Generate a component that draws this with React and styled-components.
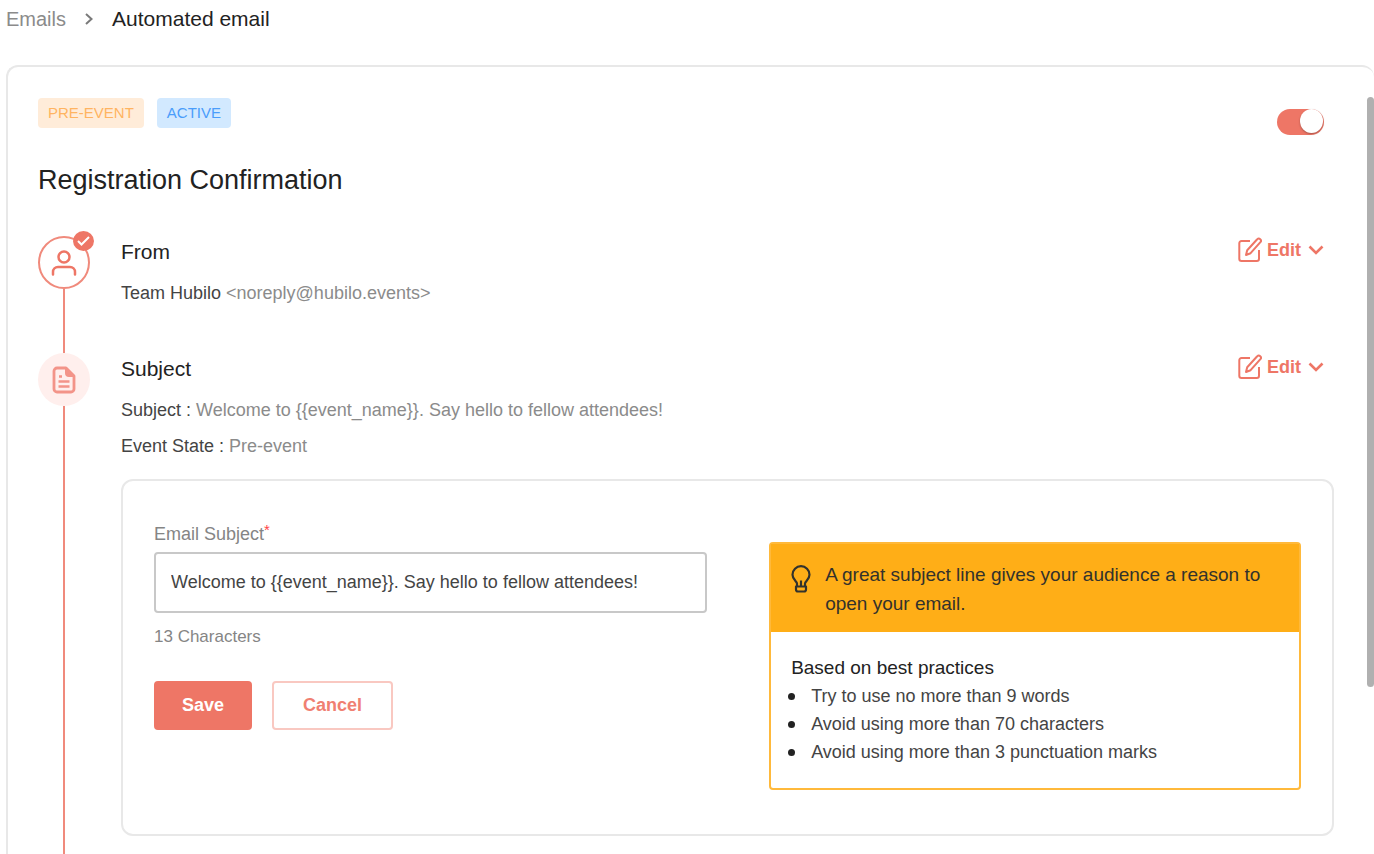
import React, { useState } from 'react'
import styled, { createGlobalStyle } from 'styled-components'

const tips = [
  'Try to use no more than 9 words',
  'Avoid using more than 70 characters',
  'Avoid using more than 3 punctuation marks',
]

const ChevronRight = () => (
  <svg width="10" height="14" viewBox="0 0 10 14" fill="none" stroke="#7a7a7a" strokeWidth="2" aria-hidden="true">
    <path d="M2 2l5.500 5L2 12" />
  </svg>
)

const ChevronDown = () => (
  <svg width="16" height="10" viewBox="0 0 16 10" fill="none" stroke="currentColor" strokeWidth="2.600" aria-hidden="true">
    <path d="M1.500 1.500L8 8l6.500-6.500" />
  </svg>
)

const PenIcon = () => (
  <svg width="24" height="26" viewBox="0 0 24 26" fill="none" stroke="currentColor" strokeWidth="2" strokeLinejoin="round" aria-hidden="true">
    <path d="M12 4H3.500A2.200 2.200 0 0 0 1.300 6.200V21.800A2.200 2.200 0 0 0 3.500 24H18.800A2.200 2.200 0 0 0 21 21.800V13" />
    <path d="M19.200 2.300a2.100 2.100 0 0 1 3.200 2.900L12.600 16.200 8 18l1.200-4.800z" />
  </svg>
)

const UserIcon = () => (
  <svg width="26" height="28" viewBox="0 0 26 28" fill="none" stroke="#ee7666" strokeWidth="2.500" strokeLinecap="round" aria-hidden="true">
    <circle cx="13" cy="8" r="5.500" />
    <path d="M2 25.500v-2.500a5 5 0 0 1 5-5h12a5 5 0 0 1 5 5V25.500" />
  </svg>
)

const FileIcon = () => (
  <svg width="24" height="28" viewBox="0 0 24 28" fill="none" stroke="#f39489" strokeWidth="2.800" strokeLinejoin="round" aria-hidden="true">
    <path d="M14 2H5a3 3 0 0 0-3 3v18a3 3 0 0 0 3 3h14a3 3 0 0 0 3-3V10z" />
    <path d="M14 2v5a3 3 0 0 0 3 3h5z" fill="#f39489" strokeWidth="2" />
    <path d="M7 10.500h3M6.500 15.500h11M6.500 20.500h11" strokeWidth="2.600" />
  </svg>
)

const CheckIcon = () => (
  <svg width="13" height="10" viewBox="0 0 13 10" fill="none" stroke="#fff" strokeWidth="2" aria-hidden="true">
    <path d="M1 5l3.500 3.500L12 1" />
  </svg>
)

const BulbIcon = () => (
  <svg width="20" height="28" viewBox="0 0 20 28" fill="none" stroke="#33322c" strokeWidth="2.200" strokeLinejoin="round" aria-hidden="true">
    <path d="M6 21v-2.500C6 16.500 1.500 14.500 1.500 9.700a8.500 8.500 0 0 1 17 0c0 4.800-4.500 6.800-4.500 8.800V21" />
    <path d="M5 21.500h10v3a2 2 0 0 1-2 2H7a2 2 0 0 1-2-2zM10 15.500v6" />
  </svg>
)

const EditButton = () => (
  <Edit type="button">
    <PenIcon />
    <span>Edit</span>
    <ChevronDown />
  </Edit>
)

const App = () => {
  const [active, setActive] = useState(true)
  const [subject, setSubject] = useState(
    'Welcome to {{event_name}}. Say hello to fellow attendees!'
  )

  return (
    <Page>
      <GlobalStyle />
      <Breadcrumb aria-label="Breadcrumb">
        <a href="#emails">Emails</a>
        <ChevronRight />
        <span>Automated email</span>
      </Breadcrumb>
      <Card>
        <Content>
          <Header>
            <Tags>
              <Tag $bg="#ffecd9" $color="#ffb461">PRE-EVENT</Tag>
              <Tag $bg="#d2e9ff" $color="#4a9dfb">ACTIVE</Tag>
            </Tags>
            <Toggle
              type="checkbox"
              role="switch"
              aria-label="Email active"
              checked={active}
              onChange={(e) => setActive(e.target.checked)}
            />
          </Header>
          <Title>Registration Confirmation</Title>

          <Step>
            <Rail>
              <Circle $outlined>
                <UserIcon />
                <Badge>
                  <CheckIcon />
                </Badge>
              </Circle>
              <Line />
            </Rail>
            <StepBody>
              <StepHead>
                <h2>From</h2>
                <EditButton />
              </StepHead>
              <Detail>
                Team Hubilo <span>&lt;noreply@hubilo.events&gt;</span>
              </Detail>
            </StepBody>
          </Step>

          <Step $grow>
            <Rail>
              <Circle>
                <FileIcon />
              </Circle>
              <Line />
            </Rail>
            <StepBody>
              <StepHead>
                <h2>Subject</h2>
                <EditButton />
              </StepHead>
              <Detail>
                Subject : <span>Welcome to {'{{event_name}}'}. Say hello to fellow attendees!</span>
              </Detail>
              <Detail>
                Event State : <span>Pre-event</span>
              </Detail>
              <Panel>
                <form onSubmit={(e) => e.preventDefault()}>
                  <Label htmlFor="subject">
                    Email Subject<sup>*</sup>
                  </Label>
                  <Input
                    id="subject"
                    type="text"
                    value={subject}
                    onChange={(e) => setSubject(e.target.value)}
                  />
                  <Counter>13 Characters</Counter>
                  <Actions>
                    <Button type="submit" $primary>Save</Button>
                    <Button type="button">Cancel</Button>
                  </Actions>
                </form>
                <Tip>
                  <TipHead>
                    <BulbIcon />
                    <p>A great subject line gives your audience a reason to open your email.</p>
                  </TipHead>
                  <TipBody>
                    <h3>Based on best practices</h3>
                    <ul>
                      {tips.map((tip) => (
                        <li key={tip}>{tip}</li>
                      ))}
                    </ul>
                  </TipBody>
                </Tip>
              </Panel>
            </StepBody>
          </Step>
        </Content>
        <Scrollbar />
      </Card>
    </Page>
  )
}

//Styled Components
const GlobalStyle = createGlobalStyle`
  * {
    margin: 0;
    padding: 0;
    box-sizing: border-box;
  }
  body {
    background: #fff;
    color: #222;
    font-family: "Liberation Sans", Arial, sans-serif;
    font-size: 18px;
  }
  input, button {
    font-family: inherit;
    font-size: inherit;
  }
  svg {
    flex: none;
  }
`

const Page = styled.main`
  height: 100vh;
  display: flex;
  flex-direction: column;
  overflow: hidden;
  padding-left: 6px;
`

const Breadcrumb = styled.nav`
  display: flex;
  align-items: center;
  gap: 18px;
  margin-bottom: 27px;
  font-size: 21px;
  line-height: 38px;

  a {
    color: #8b8b8b;
    font-size: 20px;
    text-decoration: none;
  }
`

const Card = styled.section`
  flex: 1;
  min-height: 0;
  display: flex;
  border: 2px solid #e8e8e8;
  border-width: 2px 0 0 2px;
  border-radius: 12px 12px 0 0;
`

const Content = styled.div`
  flex: 1;
  display: flex;
  flex-direction: column;
  padding: 31px 33px 0 30px;
`

const Scrollbar = styled.div`
  width: 7px;
  height: 75%;
  margin-top: 30px;
  border-radius: 4px;
  background: #b0b0b0;
`

const Header = styled.div`
  display: flex;
  justify-content: space-between;
  padding-right: 10px;
`

const Tags = styled.div`
  display: flex;
  align-items: flex-start;
  gap: 13px;
`

const Tag = styled.span`
  padding: 0 10px;
  border-radius: 4px;
  font-size: 15px;
  line-height: 30px;
  background: ${(props) => props.$bg};
  color: ${(props) => props.$color};
`

const Toggle = styled.input`
  appearance: none;
  display: flex;
  justify-content: flex-start;
  width: 47px;
  height: 26px;
  margin-top: 11px;
  border-radius: 13px;
  background: #cfcfcf;
  cursor: pointer;

  &::before {
    content: '';
    width: 23px;
    height: 24px;
    margin: 0 1px;
    border-radius: 50%;
    background: #fff;
    box-shadow: 0 1px 2px rgba(0, 0, 0, 0.3);
  }

  &:checked {
    justify-content: flex-end;
    background: #ee7666;
  }
`

const Title = styled.h1`
  margin: 29px 0 40px;
  font-size: 27px;
  font-weight: 400;
  line-height: 32px;
`

const Step = styled.div`
  flex: ${(props) => (props.$grow ? '1' : 'none')};
  display: flex;
  gap: 31px;
`

const Rail = styled.div`
  display: flex;
  flex-direction: column;
  align-items: center;
`

const Circle = styled.div`
  position: relative;
  display: flex;
  align-items: center;
  justify-content: center;
  width: 52px;
  height: 53px;
  border-radius: 50%;
  border: ${(props) => (props.$outlined ? '2px solid #f08a7c' : 'none')};
  background: ${(props) => (props.$outlined ? '#fff' : '#ffefed')};
`

const Badge = styled.span`
  position: absolute;
  top: -7px;
  right: -6px;
  display: flex;
  align-items: center;
  justify-content: center;
  width: 21px;
  height: 20px;
  border-radius: 50%;
  background: #ee7666;
`

const Line = styled.div`
  flex: 1;
  width: 2px;
  background: #f08a7c;
`

const StepBody = styled.div`
  flex: 1;
  min-width: 0;
  padding-bottom: 42px;
`

const StepHead = styled.div`
  display: flex;
  align-items: flex-start;
  justify-content: space-between;
  margin-bottom: 7px;
  padding-right: 10px;

  h2 {
    font-size: 21px;
    font-weight: 400;
    line-height: 32px;
  }
`

const Edit = styled.button`
  display: flex;
  align-items: center;
  gap: 5px;
  height: 28px;
  border: none;
  background: none;
  color: #ee7666;
  font-size: 18px;
  font-weight: 700;
  cursor: pointer;

  span {
    margin-right: 2px;
  }
`

const Detail = styled.p`
  color: #444;
  line-height: 36px;

  span {
    color: #8b8b8b;
  }
`

const Panel = styled.div`
  display: grid;
  grid-template-columns: minmax(0, 26fr) minmax(0, 25fr);
  gap: 62px;
  margin-top: 15px;
  padding: 41px 31px 44px;
  border: 2px solid #e8e8e8;
  border-radius: 12px;
`

const Label = styled.label`
  display: block;
  margin-bottom: 6px;
  color: #858585;
  line-height: 24px;

  sup {
    color: #f44;
    font-size: 15px;
    line-height: 1;
    vertical-align: top;
  }
`

const Input = styled.input`
  display: block;
  width: 100%;
  height: 61px;
  padding: 0 15px;
  border: 2px solid #c8c8c8;
  border-radius: 4px;
  color: #444;
`

const Counter = styled.p`
  margin: 12px 0 32px;
  color: #858585;
  font-size: 17px;
  line-height: 24px;
`

const Actions = styled.div`
  display: flex;
  gap: 20px;
`

const Button = styled.button`
  height: 49px;
  padding: ${(props) => (props.$primary ? '0 26px' : '0 29px')};
  border: 2px solid ${(props) => (props.$primary ? '#ee7666' : '#f9c8c1')};
  border-radius: 4px;
  background: ${(props) => (props.$primary ? '#ee7666' : '#fff')};
  color: ${(props) => (props.$primary ? '#fff' : '#f08072')};
  font-weight: 700;
  cursor: pointer;
`

const Tip = styled.aside`
  align-self: start;
  margin-top: 20px;
  border: 2px solid #ffb93b;
  border-radius: 4px;
`

const TipHead = styled.div`
  display: flex;
  gap: 14px;
  padding: 16px 20px 14px;
  background: #ffae17;
  color: #33322c;
  font-size: 19px;
  line-height: 29px;

  svg {
    margin-top: 5px;
  }
`

const TipBody = styled.div`
  padding: 22px 17px;
  line-height: 28px;

  h3 {
    padding-left: 3px;
    font-size: 19px;
    font-weight: 400;
  }

  ul {
    list-style: none;
    color: #444;
  }

  li {
    display: flex;
    align-items: center;
    gap: 16px;
  }

  li::before {
    content: '';
    width: 7px;
    height: 7px;
    border-radius: 50%;
    background: #222;
  }
`

export default App
